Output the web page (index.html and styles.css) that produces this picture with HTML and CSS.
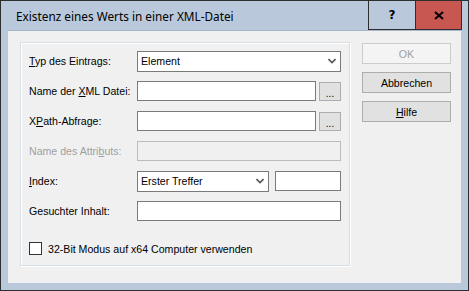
FILE: index.html
```html
<!DOCTYPE html>
<html>
<head>
<meta charset="utf-8">
<link rel="stylesheet" href="styles.css">
</head>
<body>
<div class="window">
  <div class="titlebar">
    <span class="title">Existenz eines Werts in einer XML-Datei</span>
    <div class="tb-btns">
      <div class="tb-btn help">?</div>
      <div class="tb-btn close">
        <svg width="10" height="9" viewBox="0 0 10 9"><path d="M1 1 L9 8 M9 1 L1 8" stroke="#000" stroke-width="2"/></svg>
      </div>
    </div>
  </div>
  <div class="content">
    <div class="group">
      <div class="form">
        <div class="lbl"><u>T</u>yp des Eintrags:</div>
        <div class="ctl"><div class="combo full"><span>Element</span><svg class="chev" width="8" height="6" viewBox="0 0 8 6"><path d="M0.5 1 L4 4.5 L7.5 1" fill="none" stroke="#555" stroke-width="1.6"/></svg></div></div>

        <div class="lbl">Name der <u>X</u>ML Datei:</div>
        <div class="ctl"><div class="input grow"></div><div class="dots">...</div></div>

        <div class="lbl">X<u>P</u>ath-Abfrage:</div>
        <div class="ctl"><div class="input grow"></div><div class="dots">...</div></div>

        <div class="lbl disabled">Name des Attri<u>b</u>uts:</div>
        <div class="ctl"><div class="input grow dis"></div></div>

        <div class="lbl"><u>I</u>ndex:</div>
        <div class="ctl"><div class="combo idx"><span>Erster Treffer</span><svg class="chev" width="8" height="6" viewBox="0 0 8 6"><path d="M0.5 1 L4 4.5 L7.5 1" fill="none" stroke="#555" stroke-width="1.6"/></svg></div><div class="input small"></div></div>

        <div class="lbl">Gesuchter Inhalt:</div>
        <div class="ctl"><div class="input grow"></div></div>
      </div>
      <div class="check"><span class="box"></span><span>32-Bit Modus auf x64 Computer verwenden</span></div>
    </div>
    <div class="buttons">
      <div class="btn off">OK</div>
      <div class="btn">Abbrechen</div>
      <div class="btn"><u>H</u>ilfe</div>
    </div>
  </div>
</div>
</body>
</html>
```
FILE: styles.css
```css
html, body { margin: 0; padding: 0; }
body { width: 469px; height: 291px; overflow: hidden; font-family: "Liberation Sans", Arial, sans-serif; font-size: 10.6px; color: #000; }
.window { box-sizing: border-box; width: 469px; height: 291px; border: 1px solid #2e2e2e; background: #b9c9db; padding: 0 7px 7px 7px; display: flex; flex-direction: column; }
.titlebar { margin: 0 -7px; height: 29px; display: flex; align-items: stretch; }
.title { flex: 1; padding-left: 15px; line-height: 30px; font-family: "Noto Sans", "Liberation Sans", sans-serif; font-size: 11.8px; color: #000; }
.tb-btns { display: flex; margin-right: 6px; }
.tb-btn { box-sizing: border-box; width: 47px; height: 29px; border-left: 1px solid #2e2e2e; border-bottom: 1px solid #2e2e2e; display: flex; align-items: center; justify-content: center; }
.help { font-family: "DejaVu Sans", sans-serif; font-weight: bold; font-size: 12px; background: #b9c9db; }
.close { width: 47px; border-right: 1px solid #2e2e2e; background: #c75750; }
.content { flex: 1; background: #f0f0f0; border-top: 1px solid #a7b7c9; display: flex; padding: 11px 0 0 12px; gap: 12px; }
.group { box-sizing: border-box; width: 330px; height: 224px; border: 1px solid #d5dfe5; box-shadow: inset 1px 1px 0 #fff, 1px 1px 0 #fff; padding: 3px 8px 0 8px; }
.form { display: grid; grid-template-columns: 108px 204px; grid-auto-rows: 30px; align-items: center; }
.lbl { white-space: nowrap; }
.lbl.disabled { color: #a0a0a0; }
.ctl { display: flex; align-items: center; gap: 3px; }
.input { box-sizing: border-box; height: 20px; border: 1px solid #7a7a7a; background: #fff; }
.input.grow { flex: 1; }
.input.dis { border-color: #bcbcbc; background: #f0f0f0; }
.input.small { width: 66px; margin-left: 3px; }
.combo { box-sizing: border-box; height: 21px; border: 1px solid #7a7a7a; background: #fff; display: flex; align-items: center; padding: 0 4px 0 3px; justify-content: space-between; }
.combo.full { flex: 1; }
.combo.idx { width: 132px; }
.chev { display: block; }
.dots { box-sizing: border-box; width: 22px; height: 19px; border: 1px solid #adadad; background: #e1e1e1; text-align: center; line-height: 22px; font-size: 10px; }
.check { display: flex; align-items: center; margin-top: 16px; gap: 6px; }
.box { box-sizing: border-box; width: 13px; height: 13px; border: 1px solid #333; background: #fff; }
.buttons { display: flex; flex-direction: column; gap: 8px; margin-top: 1px; }
.btn { box-sizing: border-box; width: 89px; height: 21px; border: 1px solid #adadad; background: #e1e1e1; display: flex; align-items: center; justify-content: center; }
.btn.off { border-color: #ccc; background: #f4f4f4; color: #a0a0a0; }
```
